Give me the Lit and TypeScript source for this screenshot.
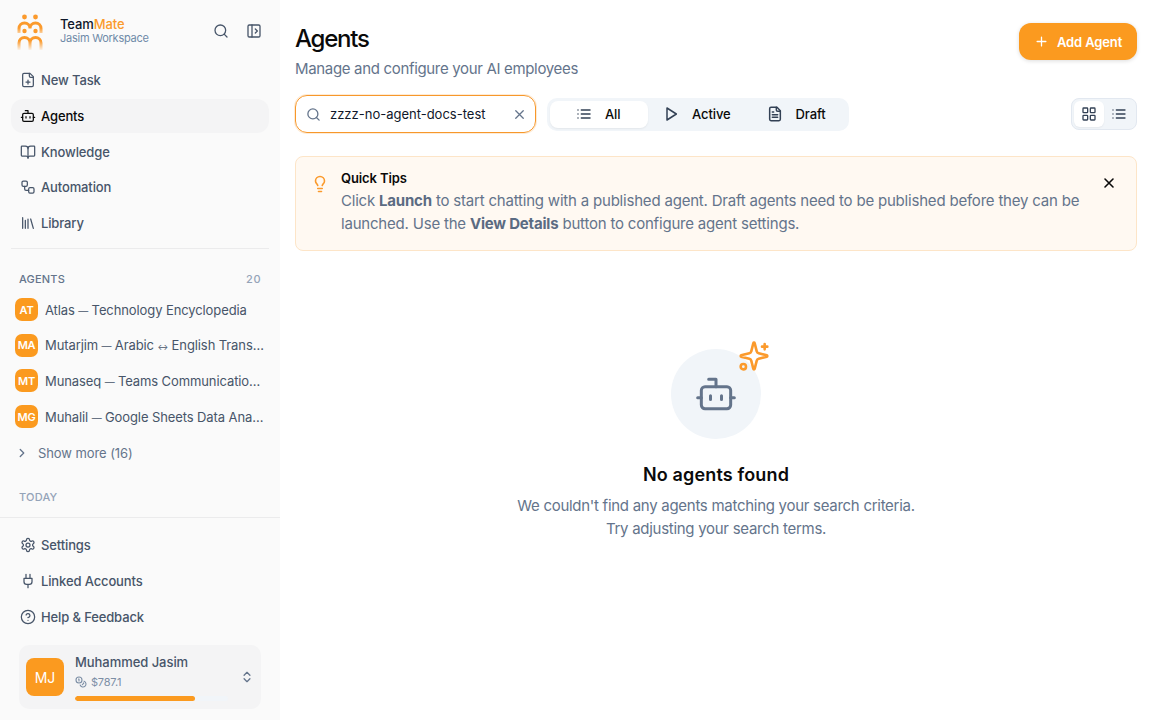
import { LitElement, html, css, svg } from "lit";
import { customElement } from "lit/decorators.js";

const ic = (c: any, size = 16, sw = 1.5) => html`<svg class="ic" width=${size} height=${size} viewBox="0 0 24 24" fill="none" stroke="currentColor" stroke-width=${sw * 24 / size} stroke-linecap="round" stroke-linejoin="round">${c}</svg>`;

const bot = svg`<path d="M12 8V4H8"/><rect x="4" y="8" width="16" height="12" rx="2"/><path d="M2 14h2M20 14h2M15 13v2M9 13v2"/>`;
const I = {
  search: svg`<circle cx="11" cy="11" r="8"/><path d="m21 21-4.3-4.3"/>`,
  panel: svg`<rect x="3" y="3" width="18" height="18" rx="2"/><path d="M9 3v18M14 9l3 3-3 3"/>`,
  newTask: svg`<path d="M15 2H6a2 2 0 0 0-2 2v16a2 2 0 0 0 2 2h12a2 2 0 0 0 2-2V7Z"/><path d="M14 2v4a2 2 0 0 0 2 2h4M9 15h6M12 18v-6"/>`,
  bot,
  book: svg`<path d="M12 7v14"/><path d="M3 18a1 1 0 0 1-1-1V4a1 1 0 0 1 1-1h5a4 4 0 0 1 4 4 4 4 0 0 1 4-4h5a1 1 0 0 1 1 1v13a1 1 0 0 1-1 1h-6a3 3 0 0 0-3 3 3 3 0 0 0-3-3z"/>`,
  workflow: svg`<rect x="3" y="3" width="8" height="8" rx="2"/><path d="M7 11v4a2 2 0 0 0 2 2h4"/><rect x="13" y="13" width="8" height="8" rx="2"/>`,
  library: svg`<path d="m16 6 4 14M12 6v14M8 8v12M4 4v16"/>`,
  chevR: svg`<path d="m9 18 6-6-6-6"/>`,
  gear: svg`<path d="M12.22 2h-.44a2 2 0 0 0-2 2v.18a2 2 0 0 1-1 1.73l-.43.25a2 2 0 0 1-2 0l-.15-.08a2 2 0 0 0-2.73.73l-.22.38a2 2 0 0 0 .73 2.73l.15.1a2 2 0 0 1 1 1.72v.51a2 2 0 0 1-1 1.74l-.15.09a2 2 0 0 0-.73 2.73l.22.38a2 2 0 0 0 2.73.73l.15-.08a2 2 0 0 1 2 0l.43.25a2 2 0 0 1 1 1.73V20a2 2 0 0 0 2 2h.44a2 2 0 0 0 2-2v-.18a2 2 0 0 1 1-1.73l.43-.25a2 2 0 0 1 2 0l.15.08a2 2 0 0 0 2.73-.73l.22-.39a2 2 0 0 0-.73-2.73l-.15-.08a2 2 0 0 1-1-1.74v-.5a2 2 0 0 1 1-1.74l.15-.09a2 2 0 0 0 .73-2.73l-.22-.38a2 2 0 0 0-2.73-.73l-.15.08a2 2 0 0 1-2 0l-.43-.25a2 2 0 0 1-1-1.73V4a2 2 0 0 0-2-2z"/><circle cx="12" cy="12" r="3"/>`,
  plug: svg`<path d="M12 22v-5M9 8V2M15 8V2M18 8v5a4 4 0 0 1-4 4h-4a4 4 0 0 1-4-4V8Z"/>`,
  help: svg`<circle cx="12" cy="12" r="10"/><path d="M9.09 9a3 3 0 0 1 5.83 1c0 2-3 3-3 3M12 17h.01"/>`,
  coins: svg`<circle cx="8" cy="8" r="6"/><path d="M18.09 10.37A6 6 0 1 1 10.34 18M7 6h1v4M16.71 13.88l.7.71-2.82 2.82"/>`,
  updown: svg`<path d="m7 15 5 5 5-5M7 9l5-5 5 5"/>`,
  x: svg`<path d="M18 6 6 18M6 6l12 12"/>`,
  plus: svg`<path d="M5 12h14M12 5v14"/>`,
  list: svg`<path d="M3 6h.01M8 6h13M3 12h.01M8 12h13M3 18h.01M8 18h13"/>`,
  play: svg`<polygon points="6 3 20 12 6 21 6 3"/>`,
  doc: svg`<path d="M15 2H6a2 2 0 0 0-2 2v16a2 2 0 0 0 2 2h12a2 2 0 0 0 2-2V7Z"/><path d="M14 2v4a2 2 0 0 0 2 2h4M10 9H8M16 13H8M16 17H8"/>`,
  grid: svg`<rect x="3" y="3" width="7" height="7" rx="1"/><rect x="14" y="3" width="7" height="7" rx="1"/><rect x="14" y="14" width="7" height="7" rx="1"/><rect x="3" y="14" width="7" height="7" rx="1"/>`,
  bulb: svg`<path d="M15 14c.2-1 .7-1.7 1.5-2.5 1-.9 1.5-2.2 1.5-3.5A6 6 0 0 0 6 8c0 1 .2 2.2 1.5 3.5.7.7 1.3 1.5 1.5 2.5M9 18h6M10 22h4"/>`,
  spark: svg`<path d="M9.94 15.5A2 2 0 0 0 8.5 14.06l-6.14-1.58a.5.5 0 0 1 0-.96L8.5 9.94A2 2 0 0 0 9.94 8.5l1.58-6.14a.5.5 0 0 1 .96 0L14.06 8.5A2 2 0 0 0 15.5 9.94l6.14 1.58a.5.5 0 0 1 0 .96L15.5 14.06a2 2 0 0 0-1.44 1.44l-1.58 6.14a.5.5 0 0 1-.96 0z"/><path d="M20 3v4M22 5h-4"/><circle cx="4" cy="20" r="2"/>`,
};

const logo = html`<svg class="logo" width="28" height="36" viewBox="0 0 28 36" fill="none">
  <defs><linearGradient id="lg" gradientUnits="userSpaceOnUse" x1="0" y1="22" x2="0" y2="36"><stop offset="0.35" stop-color="#fb9a2c"/><stop offset="1" stop-color="#fb9a2c" stop-opacity="0.08"/></linearGradient>
  <linearGradient id="lt" gradientUnits="userSpaceOnUse" x1="0" y1="8" x2="0" y2="20"><stop offset="0.5" stop-color="#fb9a2c"/><stop offset="1" stop-color="#fb9a2c" stop-opacity="0.35"/></linearGradient></defs>
  <g fill="#fb9a2c"><circle cx="8.5" cy="3" r="2.4"/><circle cx="19.5" cy="3" r="2.4"/><circle cx="8.5" cy="17" r="2.2"/><circle cx="19.5" cy="17" r="2.2"/></g>
  <path d="M3 19 V14.5 a5.5 5.5 0 0 1 11 0 a5.5 5.5 0 0 1 11 0 V19" stroke="url(#lt)" stroke-width="3"/>
  <path d="M3 36 V29 a5.5 5.5 0 0 1 11 0 V36 M14 29 a5.5 5.5 0 0 1 11 0 V36" stroke="url(#lg)" stroke-width="3"/>
</svg>`;

@customElement("app-root")
export class AppRoot extends LitElement {
  static styles = css`
    :host { display: flex; width: 1152px; height: 720px; overflow: hidden; background: #fff; font-family: Inter, "Noto Sans", sans-serif; color: #0f172a; }
    * { box-sizing: border-box; }
    .ic { flex: none; display: block; }
    .side { width: 280px; flex: none; background: #fafafa; display: flex; flex-direction: column; height: 720px; }
    .brand { height: 61px; display: flex; align-items: center; padding: 0 18px 0 16px; flex: none; }
    .logo { flex: none; margin-top: 3px; }
    .brand .txt { margin-left: 16px; flex: 1; }
    .t1 { font-size: 13px; font-weight: 500; line-height: 16px; color: #0f172a; letter-spacing: -0.1px; }
    .t1 span { color: #fb9a2c; }
    .t2 { font-size: 11px; line-height: 14px; color: #6f8aa8; letter-spacing: -0.25px; margin-top: -0.5px; }
    .hbtn { color: #475569; margin-left: 17px; }
    .nav { padding: 1px 11px 0; display: flex; flex-direction: column; }
    .item { height: 35.75px; display: flex; align-items: center; gap: 5px; padding: 0 8px 0 9px; font-size: 13px; color: #475569; border-radius: 12px; letter-spacing: -0.13px; font-weight: 500; }
    .item.on { background: #f4f4f5; color: #0a0a0a; height: 34px; margin: 1px 0; }
    .rule { height: 1px; background: #ebebec; margin: 7px 11px 0; flex: none; }
    .sec { display: flex; justify-content: space-between; align-items: center; font-size: 11px; color: #64748b; padding: 0 19px; letter-spacing: 0.2px; font-weight: 500; margin-top: 23px; height: 14px; }
    .sec b { font-weight: 500; color: #94a3b8; letter-spacing: .5px; }
    .agents { padding: 6px 15px 0; display: flex; flex-direction: column; }
    .ag { height: 35.6px; display: flex; align-items: center; gap: 7px; font-size: 13px; color: #475569; letter-spacing: -0.1px; }
    .av { width: 23px; height: 23px; border-radius: 7px; background: #fb9a1f; color: #fff; font-size: 11px; font-weight: 600; display: flex; align-items: center; justify-content: center; flex: none; letter-spacing: -0.2px; }
    .ag > span { overflow: hidden; text-overflow: ellipsis; white-space: nowrap; min-width: 0; }
    .sm { font-size: 10px; letter-spacing: -0.3px; }
    .xs { font-size: 8px; letter-spacing: -0.2px; }
    .more { height: 36px; display: flex; align-items: center; gap: 9px; font-size: 13px; color: #64748b; letter-spacing: -0.08px; margin-top: 1px; }
    .today { font-size: 11px; color: #94a3b8; padding: 0 19px; margin-top: 19px; height: 14px; letter-spacing: 0.2px; font-weight: 500; }
    .rule2 { height: 1px; background: #ebebec; margin-top: 13px; flex: none; }
    .nav2 { padding: 9px 11px 0; display: flex; flex-direction: column; }
    .nav2 .item { height: 36px; }
    .user { margin: 10px 19px 0; height: 64px; border-radius: 10px; background: #f4f4f5; display: flex; align-items: center; padding: 0 7px; flex: none; }
    .uav { width: 38px; height: 38px; border-radius: 8px; background: #fb9a1f; color: #fff; font-size: 14px; display: flex; align-items: center; justify-content: center; flex: none; font-weight: 400; }
    .ub { flex: 1; margin-left: 11px; display: flex; flex-direction: column; }
    .un { font-size: 13px; font-weight: 500; color: #475569; line-height: 16px; letter-spacing: -0.05px; }
    .um { display: flex; align-items: center; gap: 4px; font-size: 11px; color: #7c8ea5; height: 16px; margin-top: 4px; letter-spacing: -0.2px; }
    .bar { height: 5px; width: 153px; background: #f1f5f9; border-radius: 3px; margin-top: 6px; overflow: hidden; }
    .bar i { display: block; width: 120px; height: 5px; background: #fb9a1f; border-radius: 3px; }
    .updown { color: #64748b; }

    .main { flex: 1; padding: 0 15px; display: flex; flex-direction: column; min-width: 0; }
    .head { display: flex; justify-content: space-between; height: 96px; flex: none; }
    h1 { margin: 23px 0 0; font-size: 24px; line-height: 32px; font-weight: 500; color: #0a0a0a; letter-spacing: -1.25px; }
    .sub { font-size: 15px; color: #64748b; line-height: 22px; margin-top: 3px; letter-spacing: -0.33px; }
    .add { margin-top: 23px; width: 118px; height: 37px; border-radius: 12px; background: #fb9a1f; color: #fff; font-size: 13px; font-weight: 600; display: flex; align-items: center; justify-content: center; gap: 8px; box-shadow: 0 1px 4px rgba(0,0,0,.14); letter-spacing: -0.13px; }
    .tools { display: flex; align-items: center; height: 38px; flex: none; margin-top: -1px; }
    .search { width: 241px; height: 38px; border: 1px solid #f7982b; border-radius: 12px; display: flex; align-items: center; padding: 0 8px 0 10px; gap: 9px; font-size: 13px; color: #0f172a; box-shadow: 0 0 0 1px rgba(251,154,44,.2); }
    .search .q { flex: 1; letter-spacing: 0; white-space: nowrap; }
    .search .ic { color: #64748b; }
    .tabs { margin-left: 11px; width: 302px; height: 33px; background: #f1f5f9; border-radius: 10px; padding: 3px; display: flex; align-items: center; }
    .tab { height: 27px; display: flex; align-items: center; gap: 13px; font-size: 13px; font-weight: 500; color: #0a0a0a; padding: 0 15px 0 14px; border-radius: 8px; letter-spacing: -0.1px; }
    .tab.on { width: 98px; background: #fff; padding-left: 26px; box-shadow: 0 1px 2px rgba(0,0,0,.06); }
    .tab.act { padding-left: 15px; gap: 13px; }
    .tab.dr { padding-left: 21px; }
    .tab .ic { color: #334155; }
    .spacer { flex: 1; }
    .view { width: 66px; height: 32px; background: #f1f5f9; border: 1px solid #e2e8f0; border-radius: 8px; padding: 2px; display: flex; align-items: center; }
    .view div { width: 30px; height: 26px; display: flex; align-items: center; justify-content: center; border-radius: 6px; color: #334155; }
    .view div.on { background: #fff; box-shadow: 0 1px 2px rgba(0,0,0,.05); }
    .tip { margin-top: 23px; height: 95px; flex: none; background: #fff9f2; border: 1px solid #fde5c8; border-radius: 8px; display: flex; padding: 13px 19px 0 15px; }
    .tip .bulb { color: #fb9a2c; margin-top: 5px; }
    .tip .b { flex: 1; margin-left: 12px; }
    .tip h3 { margin: 0; font-size: 13px; line-height: 16px; font-weight: 600; color: #0a0a0a; letter-spacing: -0.1px; }
    .tip p { margin: 3px 0 0; font-size: 15px; line-height: 23px; color: #64748b; letter-spacing: -0.2px; }
    .tip p b { font-weight: 700; color: #5b6b82; }
    .tip .close { color: #0a0a0a; margin-top: 5px; }
    .empty { display: flex; flex-direction: column; align-items: center; margin-top: 98px; }
    .circle { width: 90px; height: 90px; border-radius: 50%; background: #f1f5f9; display: flex; align-items: center; justify-content: center; color: #64748b; position: relative; }
    .spark { position: absolute; right: -9px; top: -9px; color: #fb9a2c; }
    h2 { margin: 24px 0 0; font-size: 18px; line-height: 24px; font-weight: 600; color: #0a0a0a; letter-spacing: 0.15px; }
    .desc { font-size: 15px; line-height: 23px; color: #64748b; text-align: center; margin-top: 7px; letter-spacing: -0.28px; }
  `;

  render() {
    const nav = (i: any, t: string, on = false) => html`<div class="item ${on ? "on" : ""}">${ic(i, 16, 1.25)}<span>${t}</span></div>`;
    const d = html`<span class="sm">—</span>`;
    const ags = [
      ["AT", html`Atlas ${d} Technology Encyclopedia`],
      ["MA", html`Mutarjim ${d} Arabic <span class="xs">↔</span> English Translator`],
      ["MT", html`Munaseq ${d} Teams Communications Specialist`],
      ["MG", html`Muhalil ${d} Google Sheets Data Analyst`],
    ];
    return html`
      <aside class="side">
        <div class="brand">${logo}
          <div class="txt"><div class="t1">Team<span>Mate</span></div><div class="t2">Jasim Workspace</div></div>
          <div class="hbtn">${ic(I.search, 16, 1.3)}</div><div class="hbtn">${ic(I.panel, 16, 1.3)}</div>
        </div>
        <div class="nav">
          ${nav(I.newTask, "New Task")}${nav(I.bot, "Agents", true)}${nav(I.book, "Knowledge")}${nav(I.workflow, "Automation")}${nav(I.library, "Library")}
        </div>
        <div class="rule"></div>
        <div class="sec"><span>AGENTS</span><b>20</b></div>
        <div class="agents">
          ${ags.map(a => html`<div class="ag"><div class="av">${a[0]}</div><span>${a[1]}</span></div>`)}
          <div class="more">${ic(I.chevR, 14, 1.3)}<span>Show more (16)</span></div>
        </div>
        <div class="today">TODAY</div>
        <div class="rule2"></div>
        <div class="nav2">${nav(I.gear, "Settings")}${nav(I.plug, "Linked Accounts")}${nav(I.help, "Help & Feedback")}</div>
        <div class="user">
          <div class="uav">MJ</div>
          <div class="ub"><div class="un">Muhammed Jasim</div>
            <div class="um">${ic(I.coins, 12, 1.1)}<span>$787.1</span></div>
            <div class="bar"><i></i></div></div>
          <div class="updown">${ic(I.updown, 14, 1.3)}</div>
        </div>
      </aside>
      <main class="main">
        <div class="head">
          <div><h1>Agents</h1><div class="sub">Manage and configure your AI employees</div></div>
          <div class="add">${ic(I.plus, 15, 1.3)}<span>Add Agent</span></div>
        </div>
        <div class="tools">
          <div class="search">${ic(I.search, 15, 1.3)}<span class="q">zzzz-no-agent-docs-test</span>${ic(I.x, 15, 1.3)}</div>
          <div class="tabs">
            <div class="tab on">${ic(I.list, 16, 1.5)}<span>All</span></div>
            <div class="tab act">${ic(I.play, 16, 1.5)}<span>Active</span></div>
            <div class="tab dr">${ic(I.doc, 16, 1.5)}<span>Draft</span></div>
          </div>
          <div class="spacer"></div>
          <div class="view"><div class="on">${ic(I.grid, 16, 1.3)}</div><div>${ic(I.list, 16, 1.3)}</div></div>
        </div>
        <div class="tip">
          <div class="bulb">${ic(I.bulb, 18, 1.6)}</div>
          <div class="b"><h3>Quick Tips</h3>
            <p>Click <b>Launch</b> to start chatting with a published agent. Draft agents need to be published before they can be launched. Use the <b>View Details</b> button to configure agent settings.</p></div>
          <div class="close">${ic(I.x, 16, 1.6)}</div>
        </div>
        <div class="empty">
          <div class="circle">${ic(I.bot, 44, 3)}<div class="spark">${ic(I.spark, 32, 2.6)}</div></div>
          <h2>No agents found</h2>
          <div class="desc">We couldn't find any agents matching your search criteria.<br>Try adjusting your search terms.</div>
        </div>
      </main>`;
  }
}
